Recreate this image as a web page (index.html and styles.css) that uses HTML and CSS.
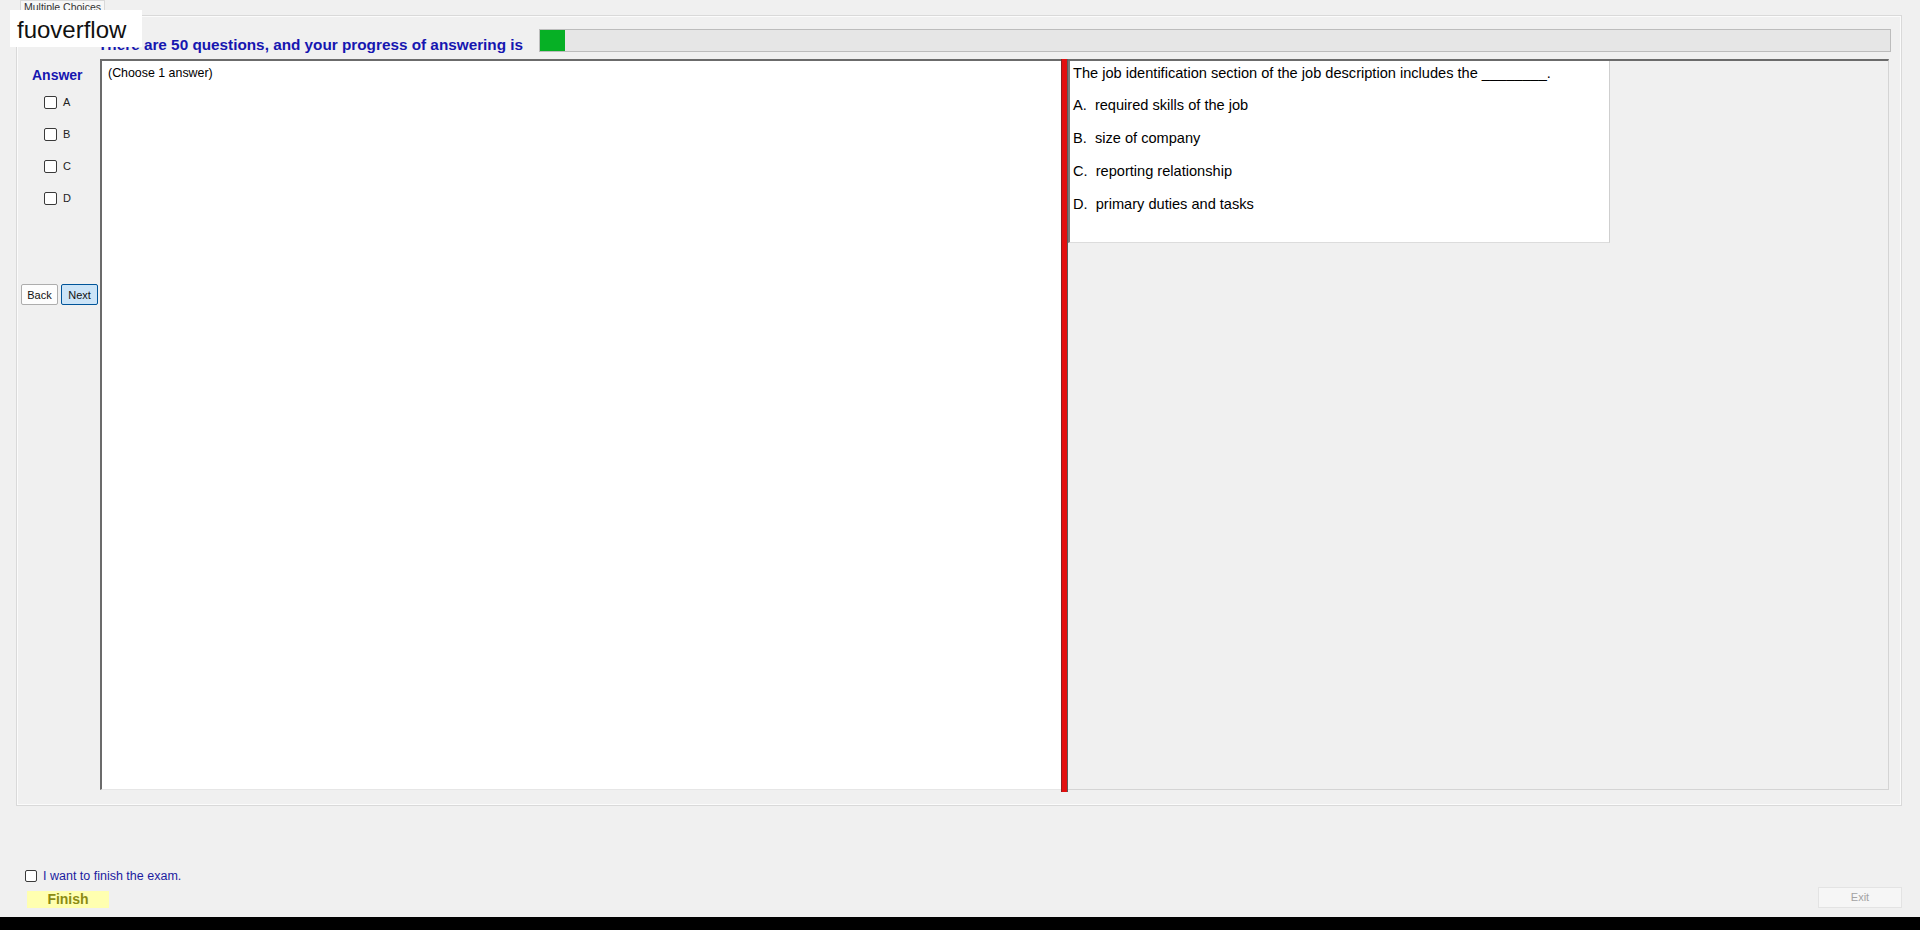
FILE: index.html
```html
<!DOCTYPE html>
<html>
<head>
<meta charset="utf-8">
<title>Multiple Choices</title>
<link rel="stylesheet" href="styles.css">
</head>
<body>
<div class="screen">
  <div class="watermark">fuoverflow</div>
  <div class="tabs"><div class="tab">Multiple Choices</div></div>
  <div class="tabpage">
    <div class="head">
      <div class="head-title">There are 50 questions, and your progress of answering is</div>
      <div class="progress"><div class="progress-fill" style="width:25px"></div></div>
    </div>
    <div class="main">
      <div class="answer-col">
        <div class="answer-title">Answer</div>
        <div class="opts">
          <label class="opt"><span class="cb"></span><span>A</span></label>
          <label class="opt"><span class="cb"></span><span>B</span></label>
          <label class="opt"><span class="cb"></span><span>C</span></label>
          <label class="opt"><span class="cb"></span><span>D</span></label>
        </div>
        <div class="nav">
          <button class="btn">Back</button>
          <button class="btn btn-active">Next</button>
        </div>
      </div>
      <div class="workspace">
        <div class="choose-box">(Choose 1 answer)</div>
        <div class="splitter"></div>
        <div class="question-area">
          <div class="question-box">
            <p class="q-line">The job identification section of the job description includes the ________.</p>
            <p class="q-opt">A.  required skills of the job</p>
            <p class="q-opt">B.  size of company</p>
            <p class="q-opt">C.  reporting relationship</p>
            <p class="q-opt">D.  primary duties and tasks</p>
          </div>
        </div>
      </div>
    </div>
  </div>
  <div class="footer">
    <div class="finish-block">
      <label class="finish-check"><span class="cb"></span><span>I want to finish the exam.</span></label>
      <div class="finish-btn">Finish</div>
    </div>
    <div class="exit-btn">Exit</div>
  </div>
</div>
<div class="taskbar"></div>
</body>
</html>
```

FILE: styles.css
```css
html, body {
  margin: 0;
  padding: 0;
}
body {
  width: 1920px;
  height: 930px;
  overflow: hidden;
  background: #f0f0f0;
  font-family: "Liberation Sans", Arial, sans-serif;
  color: #000;
}
.screen {
  position: relative;
  height: 917px;
  display: flex;
  flex-direction: column;
}
.watermark {
  position: absolute;
  left: 10px;
  top: 10px;
  width: 132px;
  height: 37px;
  box-sizing: border-box;
  padding: 2px 0 0 7px;
  background: #fff;
  font-size: 24px;
  line-height: 35px;
  color: #111;
  z-index: 5;
}
.tabs {
  height: 15px;
  padding-left: 20px;
  display: flex;
}
.tab {
  width: 85px;
  height: 16px;
  box-sizing: border-box;
  border: 1px solid #d9d9d9;
  border-bottom: none;
  background: #f7f7f7;
  font-size: 10.5px;
  line-height: 12px;
  color: #333;
  text-align: center;
  position: relative;
  z-index: 1;
}
.tabpage {
  margin: 0 18px 0 16px;
  height: 791px;
  box-sizing: border-box;
  border: 1px solid #d9d9d9;
  box-shadow: inset 1px 1px 0 #fbfbfb, inset -1px -1px 0 #fbfbfb;
  display: flex;
  flex-direction: column;
}
.head {
  display: flex;
  align-items: flex-end;
  height: 23px;
  margin-top: 13px;
  padding: 0 10px 0 81px;
}
.head-title {
  width: 441px;
  flex: none;
  white-space: nowrap;
  font-weight: bold;
  font-size: 15.3px;
  line-height: 17px;
  margin-bottom: -1px;
  color: #1616b0;
}
.progress {
  flex: 1;
  height: 23px;
  box-sizing: border-box;
  background: #e6e6e6;
  border: 1px solid #bcbcbc;
  display: flex;
}
.progress-fill {
  height: 100%;
  background: #06b025;
}
.main {
  display: flex;
  margin-top: 7px;
  height: 733px;
}
.answer-col {
  width: 83px;
  flex: none;
  box-sizing: border-box;
  padding-left: 4px;
  display: flex;
  flex-direction: column;
}
.answer-title {
  margin: 8px 0 0 11px;
  font-weight: bold;
  font-size: 14px;
  line-height: 16px;
  color: #1616b0;
}
.opts {
  margin-top: 3px;
  display: flex;
  flex-direction: column;
}
.opt {
  height: 32px;
  display: flex;
  align-items: center;
  gap: 6px;
  padding-left: 23px;
  font-size: 11px;
  color: #222;
}
.cb {
  width: 13px;
  height: 13px;
  box-sizing: border-box;
  border: 1px solid #3a3a3a;
  border-radius: 2px;
  background: #fff;
  flex: none;
}
.nav {
  margin-top: 70px;
  display: flex;
  gap: 3px;
}
.btn {
  width: 37px;
  height: 21px;
  padding: 0;
  box-sizing: border-box;
  border: 1px solid #adadad;
  border-radius: 2px;
  background: #fdfdfd;
  font-family: "Liberation Sans", Arial, sans-serif;
  font-size: 11px;
  color: #111;
}
.btn-active {
  background: #cce4f7;
  border-color: #005499;
}
.workspace {
  flex: 1;
  display: flex;
  margin-right: 12px;
}
.choose-box {
  width: 961px;
  height: 731px;
  flex: none;
  box-sizing: border-box;
  background: #fff;
  border-top: 2px solid #6b6b6b;
  border-left: 2px solid #6b6b6b;
  border-bottom: 1px solid #e6e6e6;
  padding: 5px 6px;
  font-size: 12.4px;
  line-height: 14px;
}
.splitter {
  width: 5px;
  height: 733px;
  flex: none;
  background: #e20f0f;
  border-left: 1px solid #8a2020;
  border-right: 1px solid #5a5a5a;
}
.question-area {
  flex: 1;
  height: 731px;
  box-sizing: border-box;
  border-top: 2px solid #6b6b6b;
  border-right: 1px solid #d4d4d4;
  border-bottom: 1px solid #d4d4d4;
  display: flex;
  align-items: flex-start;
}
.question-box {
  width: 542px;
  box-sizing: border-box;
  background: #fff;
  border-left: 2px solid #7a7a7a;
  border-right: 1px solid #cfcfcf;
  border-bottom: 1px solid #dcdcdc;
  padding: 4px 0 30px 3px;
  font-size: 14.6px;
  line-height: 16px;
}
.q-line, .q-opt {
  margin: 0;
  white-space: pre;
}
.q-opt {
  margin-top: 17px;
}
.q-line + .q-opt {
  margin-top: 16px;
}
.footer {
  flex: 1;
  display: flex;
  justify-content: space-between;
  align-items: flex-end;
  padding: 0 18px 9px 25px;
}
.finish-block {
  display: flex;
  flex-direction: column;
}
.finish-check {
  display: flex;
  align-items: center;
  gap: 6px;
  font-size: 12.5px;
  line-height: 14px;
  color: #1c1ca0;
}
.finish-check .cb {
  width: 12px;
  height: 12px;
}
.finish-btn {
  margin: 8px 0 0 2px;
  width: 82px;
  height: 17px;
  background: #ffffb0;
  color: #8b8b13;
  font-weight: bold;
  font-size: 14px;
  line-height: 17px;
  text-align: center;
}
.exit-btn {
  width: 84px;
  height: 21px;
  box-sizing: border-box;
  border: 1px solid #e3e3e3;
  background: #f6f6f6;
  color: #a3a3a3;
  font-size: 11px;
  line-height: 19px;
  text-align: center;
}
.taskbar {
  height: 13px;
  background: #000;
}
```
